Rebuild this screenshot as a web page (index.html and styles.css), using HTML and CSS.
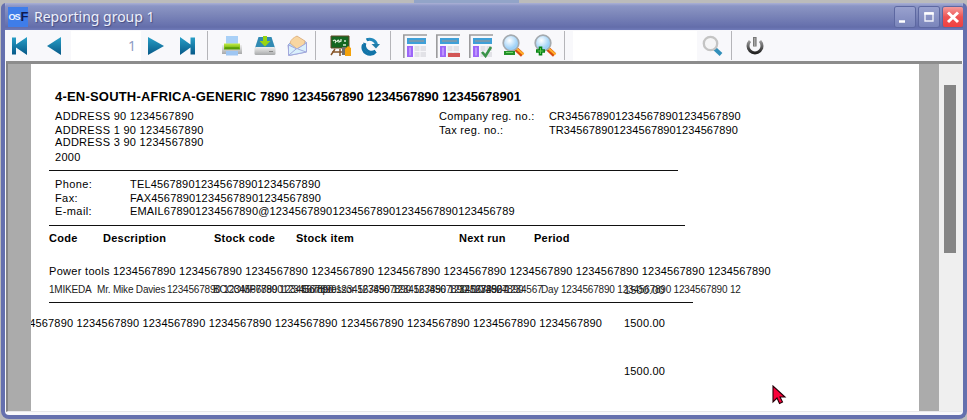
FILE: index.html
```html
<!DOCTYPE html>
<html lang="en">
<head>
<meta charset="utf-8">
<title>Reporting group 1</title>
<link rel="stylesheet" href="styles.css">
</head>
<body>
<main class="window">
  <header class="titlebar">
    <span class="app-icon"><span>OS</span><b>F</b></span>
    <h1>Reporting group 1</h1>
    <div class="controls">
      <span class="ctl"><svg width="20" height="20"><path d="M4 14.500h6" stroke="#fff" stroke-width="2.500"/></svg></span>
      <span class="ctl"><svg width="20" height="20"><path d="M6 6h8v8H6z" fill="none" stroke="#f1f2fa" stroke-width="1.400"/><path d="M5.300 6.500h9.400" stroke="#fff" stroke-width="2.400"/></svg></span>
      <span class="ctl close"><svg width="20" height="20"><path d="M5 5.500l10 9.500M15 5.500l-10 9.500" stroke="#fff" stroke-width="3"/></svg></span>
    </div>
  </header>
  <svg class="defs" width="0" height="0">
    <defs>
      <linearGradient id="blue" x2="0" y2="1"><stop stop-color="#28a0c8"/><stop offset="1" stop-color="#075887"/></linearGradient>
      <linearGradient id="tray" x2="0" y2="1"><stop stop-color="#efefef"/><stop offset="1" stop-color="#a7a9aa"/></linearGradient>
      <linearGradient id="green" x2="0" y2="1"><stop stop-color="#c6ed45"/><stop offset="1" stop-color="#5ba500"/></linearGradient>
      <radialGradient id="glass" cx=".4" cy=".35"><stop stop-color="#fff"/><stop offset="1" stop-color="#9fd2f8"/></radialGradient>
      <linearGradient id="power" x2="0" y2="1"><stop stop-color="#999"/><stop offset="1" stop-color="#222"/></linearGradient>
      <g id="table">
        <path d="M.8 24V1H24" fill="none" stroke="#9c9c9e" stroke-width="1.700"/>
        <path d="M4 4h19v6H4z" fill="#3fa0d8"/><path d="M6 7h15" stroke="#8998a4" stroke-width="1.600"/>
        <path d="M4 12h6v11H4z" fill="#9c66f8"/><path d="M7 13.500v8" stroke="#c8a5ff" stroke-width="1.500"/>
        <path d="M11.500 12H23v11H11.500z" fill="#e2e2e7"/><path d="M11.500 17.500H23M17 12v11" stroke="#f6f6f9"/>
      </g>
      <g id="lens">
        <path d="M13.500 14.500l7 6.500" stroke="#d84c10" stroke-width="4.500"/><path d="M14 14l7.500 6.500" stroke="#ffb02b" stroke-width="2.300"/>
        <circle cx="9" cy="9" r="7.800" fill="url(#glass)" stroke="#a4aaaf" stroke-width="1.700"/>
      </g>
    </defs>
  </svg>
  <nav class="toolbar">
    <svg class="i-first" width="18" height="20"><path d="M1 1.500h4v7L16 1v18L5 11.500v7H1z" fill="url(#blue)"/></svg>
    <svg class="i-prev" width="16" height="20"><path d="M15 1v18L1 10z" fill="url(#blue)"/></svg>
    <span class="page-no">1</span>
    <svg class="i-next" width="18" height="20"><path d="M1 1v18l16-9z" fill="url(#blue)"/></svg>
    <svg class="i-last" width="18" height="20"><path d="M1 1v18l10.500-7.500v7H16v-17h-4.500v7z" fill="url(#blue)"/></svg>
    <i class="sep sep-a"></i>
    <svg class="i-print" width="22" height="22"><path d="M5 1h12v9H5z" fill="#a9d0f7"/><path d="M1 10h20v9H1z" fill="url(#tray)"/><path d="M3 8.500h16v6H3z" fill="url(#green)"/><path d="M4 13h14" stroke="#438900"/><path d="M5 16h12v4.500H5z" fill="#9ec6f3"/></svg>
    <svg class="i-save" width="22" height="20"><path d="M4.500 1h13L21 12v5H1v-5z" fill="#318ab3"/><rect x=".5" y="11" width="21" height="8" rx="1.500" fill="url(#tray)"/><path d="M9 0h4v5h3.500L11 10.500 5.500 5H9z" fill="#98d411"/><path d="M15 15.500h4" stroke="#888"/></svg>
    <svg class="i-mail" width="21" height="22"><path d="M1 10l9-8.500 9.500 6V17L2 20.500z" fill="#b8d7f6" stroke="#98a6d8"/><path d="M3 8c1-4 4-5.500 7-7l8 5-1 4-7 4z" fill="#f8d6a1" stroke="#dca76e" stroke-width=".7"/><path d="M1.500 10l8.500 4 9.500-6v9L2 20.500z" fill="#d9f0fc"/><path d="M1.500 10l8.500 4 9.500-6M2 20l7-6m2 0l8 3M1.500 10v10.500L19.500 17V8" stroke="#a3a8dc" fill="none"/></svg>
    <i class="sep sep-b"></i>
    <svg class="i-board" width="21" height="22"><path d="M5 14l-4 6m9-6v7M2 17h10M15 14l2 6" stroke="#875629" stroke-width="1.500"/><path d="M1 1h18v12H1z" fill="#146621" stroke="#654825"/><path d="M3 6c2-2 4 0 2 2m2-1c1-3 2-2 2 0l2-1V4m3 2h2m-3 4h3" stroke="#d9ecd4" stroke-width="1.300" fill="none"/><path d="M12 12h4v8h-4z" fill="#706e6d"/><path d="M15 14l3-3 3 2v8h-6z" fill="#f4a20a"/></svg>
    <svg class="i-refresh" width="20" height="20"><path d="M5.500 4A7 7 0 0 1 15.500 8.500" fill="none" stroke="#2489bb" stroke-width="3"/><path d="M10.500 8H19l-4 4.500z" fill="#217da9"/><path d="M7 3.200A7 7 0 1 0 14.500 15" fill="none" stroke="#1274a8" stroke-width="3" stroke-dasharray="1 4 30"/><path d="M2.500 8.500A7 7 0 0 0 14.500 15.500" fill="none" stroke="#1274a8" stroke-width="3"/></svg>
    <i class="sep sep-c"></i>
    <svg class="i-tab" width="24" height="24"><use href="#table"/></svg>
    <svg class="i-tab" width="24" height="24"><use href="#table"/><path d="M12 19h12v4H12z" fill="#d35757"/></svg>
    <svg class="i-tab" width="24" height="24"><use href="#table"/><path d="M13 18l3.500 4L22 13" fill="none" stroke="#399348" stroke-width="2.600"/></svg>
    <svg class="i-zoom" width="23" height="23"><use href="#lens"/><path d="M2 17h11v4H2z" fill="#239129"/><path d="M4 18.500h7" stroke="#72d467"/></svg>
    <svg class="i-zoom" width="23" height="23"><use href="#lens"/><path d="M2 17h9M6.500 12.500v9" stroke="#078315" stroke-width="3.600"/><path d="M3.500 17h6M6.500 14v6" stroke="#60c653"/></svg>
    <i class="sep sep-d"></i>
    <span class="search"></span>
    <svg class="i-find" width="22" height="22"><path d="M12 13l7 6.500" stroke="#318fba" stroke-width="4"/><circle cx="8.500" cy="8.500" r="6.700" fill="#f5f5f6" stroke="#c4c4c4" stroke-width="2.300"/></svg>
    <i class="sep sep-e"></i>
    <svg class="i-power" width="18" height="19"><path d="M4 5A7 7 0 1 0 14 5" fill="none" stroke="url(#power)" stroke-width="3"/><path d="M8.800 1v9.500" stroke="#777" stroke-width="3.600"/><path d="M8.800 2v8" stroke="#bbb"/></svg>
  </nav>
  <div class="viewer">
    <section class="paper">
      <h2><span class="company">4-EN-SOUTH-AFRICA-GENERIC</span>7890 1234567890 1234567890 12345678901</h2>
      <div class="letterhead">
        <address>
          <span>ADDRESS 90 1234567890</span><span class="a2">ADDRESS 1 90 1234567890</span><span>ADDRESS 3 90 1234567890</span><span class="a4">2000</span>
        </address>
        <dl class="registration">
          <dt class="long">Company reg. no.:</dt><dd>CR3456789012345678901234567890</dd>
          <dt class="tax">Tax reg. no.:</dt><dd class="tax-no">TR3456789012345678901234567890</dd>
        </dl>
      </div>
      <hr class="rule-a">
      <dl class="contact">
        <dt>Phone:</dt><dd>TEL456789012345678901234567890</dd>
        <dt>Fax:</dt><dd>FAX456789012345678901234567890</dd>
        <dt>E-mail:</dt><dd class="email">EMAIL678901234567890@123456789012345678901234567890123456789</dd>
      </dl>
      <hr class="rule-b">
      <div class="columns"><b>Code</b><b>Description</b><b>Stock code</b><b>Stock item</b><b>Next run</b><b>Period</b></div>
      <p class="group"><span class="group-name">Power tools</span>1234567890 1234567890 1234567890 1234567890 1234567890 1234567890 1234567890 1234567890 1234567890 1234567890</p>
      <div class="detail">
        <span>1MIKEDA</span><span><span class="person">Mr. Mike Davies</span>1234567890 1234567890 1234567890 1234567890 1234567890 1234567890 1234567</span>
        <span>BCCOMP678901234567890</span><span>Compressor 1234567890 1234567890 1234567890</span><span>12/10/2024</span><span><span class="period">Day</span>1234567890 1234567890 1234567890 12</span><span class="amount">1500.00</span>
      </div>
      <hr class="rule-c">
      <div class="total"><span class="total-name">1234567890 1234567890 1234567890 1234567890 1234567890 1234567890 1234567890 1234567890 1234567890</span><span class="amount">1500.00</span></div>
      <div class="total grand"><span class="amount">1500.00</span></div>
    </section>
    <div class="scrollbar"><div class="thumb"></div></div>
  </div>
</main>
<svg class="cursor" width="15" height="20"><path d="M1 1v16l4-4 2.500 5.500 3-1.500L8 12h5z" fill="#fa0039" stroke="#210008" stroke-width="1.100"/></svg>
</body>
</html>
```

FILE: styles.css
```css
* { box-sizing: border-box; }
body {
  margin: 0; width: 967px; height: 420px; overflow: hidden;
  padding: 3px 0 1px 1px;
  background: linear-gradient(90deg, #bbb 0 414px, #92a4c8 414px 519px, #bbb 519px) 0 0 / 100% 5px no-repeat #bbb;
  font: 11px/12px "Liberation Sans", Arial, sans-serif;
}
.window {
  width: 966px; height: 416px; display: flex; flex-direction: column;
  border: solid #6570ae; border-width: 0 4px 4px;
  border-radius: 5px 5px 8px 8px; overflow: hidden; background: #f8f8fb;
}
.titlebar {
  height: 27px; flex: none; margin: 0 -4px; padding: 0 4px 0 7px;
  display: flex; align-items: center;
  background: linear-gradient(#aab0d5, #8b95c5 3px, #7f89bb 10px, #6872ae 22px, #636daa 24px, #6f7ab8);
}
.app-icon {
  width: 20px; height: 20px; background: #3f7de9; color: #eef4ff;
  display: flex; align-items: center; justify-content: center;
  font: bold 9px/20px "Liberation Sans"; letter-spacing: -1px;
}
.app-icon b { color: #10194f; font-size: 13px; margin-left: 1px; }
h1 {
  margin: 0 0 0 6px; font: 14px/20px "Noto Sans", sans-serif; color: #eef0fa;
  text-shadow: 1px 1px 1px #454d82;
}
.controls { display: flex; gap: 4px; margin-left: auto; padding-top: 1px; }
.ctl { width: 20px; height: 20px; border-radius: 2px; background: linear-gradient(#99a1ce, #7a85bb); box-shadow: 0 0 0 1px #5d68a1; }
.ctl svg { display: block; }
.close { background: linear-gradient(#f59b9b, #ee5353 50%, #f04040); }
.defs { position: absolute; }
.toolbar { height: 31px; flex: none; display: flex; align-items: center; }
.toolbar svg { flex: none; }
.i-first { margin-left: 6px; }
.i-prev { margin-left: 17px; }
.page-no {
  width: 70px; height: 30px; margin-left: 9px; padding-right: 5px; background: #fff;
  color: #8e9cc4; font: 14px/30px "Noto Sans", sans-serif; text-align: right;
}
.i-next { margin-left: 6px; }
.i-last { margin-left: 14px; }
.sep { width: 1px; height: 29px; background: #b5b5b9; flex: none; }
.sep-a { margin-left: 10px; }
.i-print { margin-left: 13px; }
.i-save { margin-left: 11px; }
.i-mail { margin-left: 11px; }
.sep-b { margin-left: 7px; }
.i-board { margin-left: 14px; }
.i-refresh { margin-left: 10px; }
.sep-c { margin-left: 9px; }
.i-tab { margin-left: 12px; }
.i-tab + .i-tab { margin-left: 9px; }
.i-zoom { margin-left: 9px; }
.i-zoom + .i-zoom { margin-left: 9px; }
.sep-d { margin-left: 7px; }
.search { width: 124px; height: 30px; margin-left: 8px; background: #fff; }
.i-find { margin-left: 5px; }
.sep-e { margin-left: 7px; }
.i-power { margin-left: 14px; }
.viewer {
  flex: 1; min-height: 0; margin: 0 1px; display: flex;
  border-top: 3px solid #8c8c8c; border-left: 2px solid #858585; border-bottom: 1px solid #e7e7ea;
  background: #ababab; padding-left: 23px; margin-bottom: 3px;
}
.paper {
  width: 888px; flex: none; background: #fff; overflow: hidden; white-space: nowrap;
  padding-left: 18px; color: #000; letter-spacing: .17px;
}
.scrollbar { width: 24px; margin-left: 20px; padding: 21px 0 0 5px; background: #efefef; flex: none; }
.thumb { width: 12px; height: 168px; background: #858585; }
h2 { margin: 26px 0 0 6px; font: bold 13px/14px "Liberation Sans", Arial, sans-serif; letter-spacing: -.08px; color: #000; display: flex; }
.company { width: 205px; letter-spacing: .2px; }
.letterhead { display: flex; margin: 6px 0 0 6px; height: 60px; }
address { font-style: normal; width: 384px; display: flex; flex-direction: column; letter-spacing: .3px; }
.a2 { margin-top: 2px; }
.a4 { margin-top: 3px; }
dl { margin: 0; display: grid; }
dd { margin: 0; }
.registration { grid-template-columns: 110px auto; align-content: start; row-gap: 2px; letter-spacing: .15px; }
.long { letter-spacing: .3px; }
.tax { letter-spacing: .3px; }
.tax-no { letter-spacing: .1px; }
hr { margin: 0; border: 0; height: 1px; background: #111; }
.rule-a { width: 629px; }
.contact { grid-template: 14px 13px 14px / 75px auto; margin: 7px 0 0 6px; }
.contact dt { letter-spacing: .4px; }
.rule-b { width: 636px; margin-top: 6px; }
.columns, .detail { display: grid; line-height: 12px; }
.columns { grid-template-columns: 54px 111px 82px 163px 75px 80px; margin-top: 6px; letter-spacing: .25px; }
.group { display: flex; margin: 21px 0 0; }
.group-name { width: 64px; letter-spacing: .3px; }
.detail {
  grid-template-columns: 48px 116px 89px 157px 82px 83px 41px; margin-top: 7px;
  font-size: 10px; letter-spacing: -.19px; color: #222;
}
.person { display: inline-block; width: 70px; }
.period { display: inline-block; width: 20px; }
.detail .amount { font-size: 11px; letter-spacing: .16px; }
.rule-c { width: 644px; margin-top: 6px; }
.total { display: flex; margin-top: 14px; width: 616px; justify-content: flex-end; }
.total-name { margin-right: 22px; }
.grand { margin-top: 36px; }
.cursor { position: absolute; left: 772px; top: 385px; }
```
